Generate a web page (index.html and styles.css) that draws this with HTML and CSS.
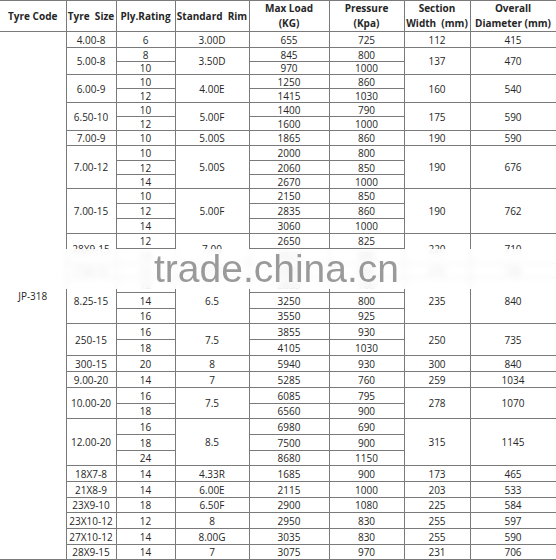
FILE: index.html
```html
<!DOCTYPE html>
<html>
<head>
<meta charset="utf-8">
<link rel="stylesheet" href="styles.css">
</head>
<body>
<div class="sheet">
<table class="spec">
<colgroup>
<col class="c1"><col class="c2"><col class="c3"><col class="c4"><col class="c5"><col class="c6"><col class="c7"><col class="c8">
</colgroup>
<thead>
<tr class="h30">
<th class="first">Tyre Code</th><th>Tyre&nbsp; Size</th><th>Ply.Rating</th><th>Standard&nbsp; Rim</th><th>Max Load<br>(KG)</th><th>Pressure<br>(Kpa)</th><th>Section<br>Width&nbsp; (mm)</th><th>Overall<br>Diameter (mm)</th>
</tr>
</thead>
<tbody>
<tr class="h16"><td class="first" rowspan="35">JP-318</td><td>4.00-8</td><td>6</td><td>3.00D</td><td>655</td><td>725</td><td>112</td><td>415</td></tr>
<tr class="h14"><td rowspan="2">5.00-8</td><td>8</td><td rowspan="2">3.50D</td><td>845</td><td>800</td><td rowspan="2">137</td><td rowspan="2">470</td></tr>
<tr class="h13"><td>10</td><td>970</td><td>1000</td></tr>
<tr class="h14"><td rowspan="2">6.00-9</td><td>10</td><td rowspan="2">4.00E</td><td>1250</td><td>860</td><td rowspan="2">160</td><td rowspan="2">540</td></tr>
<tr class="h14"><td>12</td><td>1415</td><td>1030</td></tr>
<tr class="h14"><td rowspan="2">6.50-10</td><td>10</td><td rowspan="2">5.00F</td><td>1400</td><td>790</td><td rowspan="2">175</td><td rowspan="2">590</td></tr>
<tr class="h14"><td>12</td><td>1600</td><td>1000</td></tr>
<tr class="h15"><td>7.00-9</td><td>10</td><td>5.00S</td><td>1865</td><td>860</td><td>190</td><td>590</td></tr>
<tr class="h15"><td rowspan="3">7.00-12</td><td>10</td><td rowspan="3">5.00S</td><td>2000</td><td>800</td><td rowspan="3">190</td><td rowspan="3">676</td></tr>
<tr class="h14"><td>12</td><td>2060</td><td>850</td></tr>
<tr class="h14"><td>14</td><td>2670</td><td>1000</td></tr>
<tr class="h15"><td rowspan="3">7.00-15</td><td>10</td><td rowspan="3">5.00F</td><td>2150</td><td>850</td><td rowspan="3">190</td><td rowspan="3">762</td></tr>
<tr class="h15"><td>12</td><td>2835</td><td>860</td></tr>
<tr class="h15"><td>14</td><td>3060</td><td>1000</td></tr>
<tr class="h15"><td rowspan="2">28X9-15</td><td>12</td><td rowspan="2">7.00</td><td>2650</td><td>825</td><td rowspan="2">220</td><td rowspan="2">710</td></tr>
<tr class="h15"><td>14</td><td>3020</td><td>900</td></tr>
<tr class="h14"><td>7.50-15</td><td>12</td><td>6.00</td><td>2990</td><td>860</td><td>215</td><td>735</td></tr>
<tr class="h15"><td rowspan="3">8.25-15</td><td>12</td><td rowspan="3">6.5</td><td>2855</td><td>700</td><td rowspan="3">235</td><td rowspan="3">840</td></tr>
<tr class="h16"><td>14</td><td>3250</td><td>800</td></tr>
<tr class="h15"><td>16</td><td>3550</td><td>925</td></tr>
<tr class="h16"><td rowspan="2">250-15</td><td>16</td><td rowspan="2">7.5</td><td>3855</td><td>930</td><td rowspan="2">250</td><td rowspan="2">735</td></tr>
<tr class="h16"><td>18</td><td>4105</td><td>1030</td></tr>
<tr class="h16"><td>300-15</td><td>20</td><td>8</td><td>5940</td><td>930</td><td>300</td><td>840</td></tr>
<tr class="h16"><td>9.00-20</td><td>14</td><td>7</td><td>5285</td><td>760</td><td>259</td><td>1034</td></tr>
<tr class="h16"><td rowspan="2">10.00-20</td><td>16</td><td rowspan="2">7.5</td><td>6085</td><td>795</td><td rowspan="2">278</td><td rowspan="2">1070</td></tr>
<tr class="h15"><td>18</td><td>6560</td><td>900</td></tr>
<tr class="h16"><td rowspan="3">12.00-20</td><td>16</td><td rowspan="3">8.5</td><td>6980</td><td>690</td><td rowspan="3">315</td><td rowspan="3">1145</td></tr>
<tr class="h16"><td>18</td><td>7500</td><td>900</td></tr>
<tr class="h15"><td>24</td><td>8680</td><td>1150</td></tr>
<tr class="h16"><td>18X7-8</td><td>14</td><td>4.33R</td><td>1685</td><td>900</td><td>173</td><td>465</td></tr>
<tr class="h16"><td>21X8-9</td><td>14</td><td>6.00E</td><td>2115</td><td>1000</td><td>203</td><td>533</td></tr>
<tr class="h15"><td>23X9-10</td><td>18</td><td>6.50F</td><td>2900</td><td>1080</td><td>225</td><td>584</td></tr>
<tr class="h16"><td>23X10-12</td><td>12</td><td>8</td><td>2950</td><td>830</td><td>255</td><td>597</td></tr>
<tr class="h16"><td>27X10-12</td><td>14</td><td>8.00G</td><td>3035</td><td>830</td><td>255</td><td>590</td></tr>
<tr class="h15"><td>28X9-15</td><td>14</td><td>7</td><td>3075</td><td>970</td><td>231</td><td>706</td></tr>
</tbody>
</table>
<div class="foot"></div>
<div class="watermark"><span class="wm-text">trade.china.cn</span></div>
</div>
</body>
</html>
```
FILE: styles.css
```css
html, body {
  margin: 0;
  padding: 0;
  background: #ffffff;
}
.sheet {
  position: relative;
  width: 556px;
  height: 560px;
  overflow: hidden;
}
.spec {
  width: 556px;
  table-layout: fixed;
  border-collapse: collapse;
  font-family: "Open Sans", "Liberation Sans", sans-serif;
  font-size: 10px;
  color: #262626;
}
.c1 { width: 66px; }
.c2 { width: 50px; }
.c3 { width: 59px; }
.c4 { width: 74px; }
.c5 { width: 80px; }
.c6 { width: 75px; }
.c7 { width: 66px; }
.c8 { width: 86px; }
.spec th, .spec td {
  border: 1px solid #7a7a7a;
  padding: 0;
  text-align: center;
  vertical-align: middle;
  line-height: 12px;
  white-space: nowrap;
  overflow: hidden;
}
.spec th {
  font-weight: bold;
  line-height: 15px;
}
.spec .first {
  border-left: none;
}
.h30 { height: 30px; }
.h13 { height: 13px; }
.h14 { height: 14px; }
.h15 { height: 15px; }
.h16 { height: 16px; }
.foot {
  height: 4px;
  background: #bdbdbd;
}
.watermark {
  position: absolute;
  left: 0;
  top: 249px;
  width: 556px;
  height: 40px;
  background: rgba(255, 255, 255, 0.86);
  backdrop-filter: blur(3px);
  display: flex;
  align-items: center;
}
.wm-text {
  margin-left: 154px;
  font-family: "Liberation Sans", Arial, sans-serif;
  font-size: 39px;
  line-height: 40px;
  color: #9a9a9a;
}
```
